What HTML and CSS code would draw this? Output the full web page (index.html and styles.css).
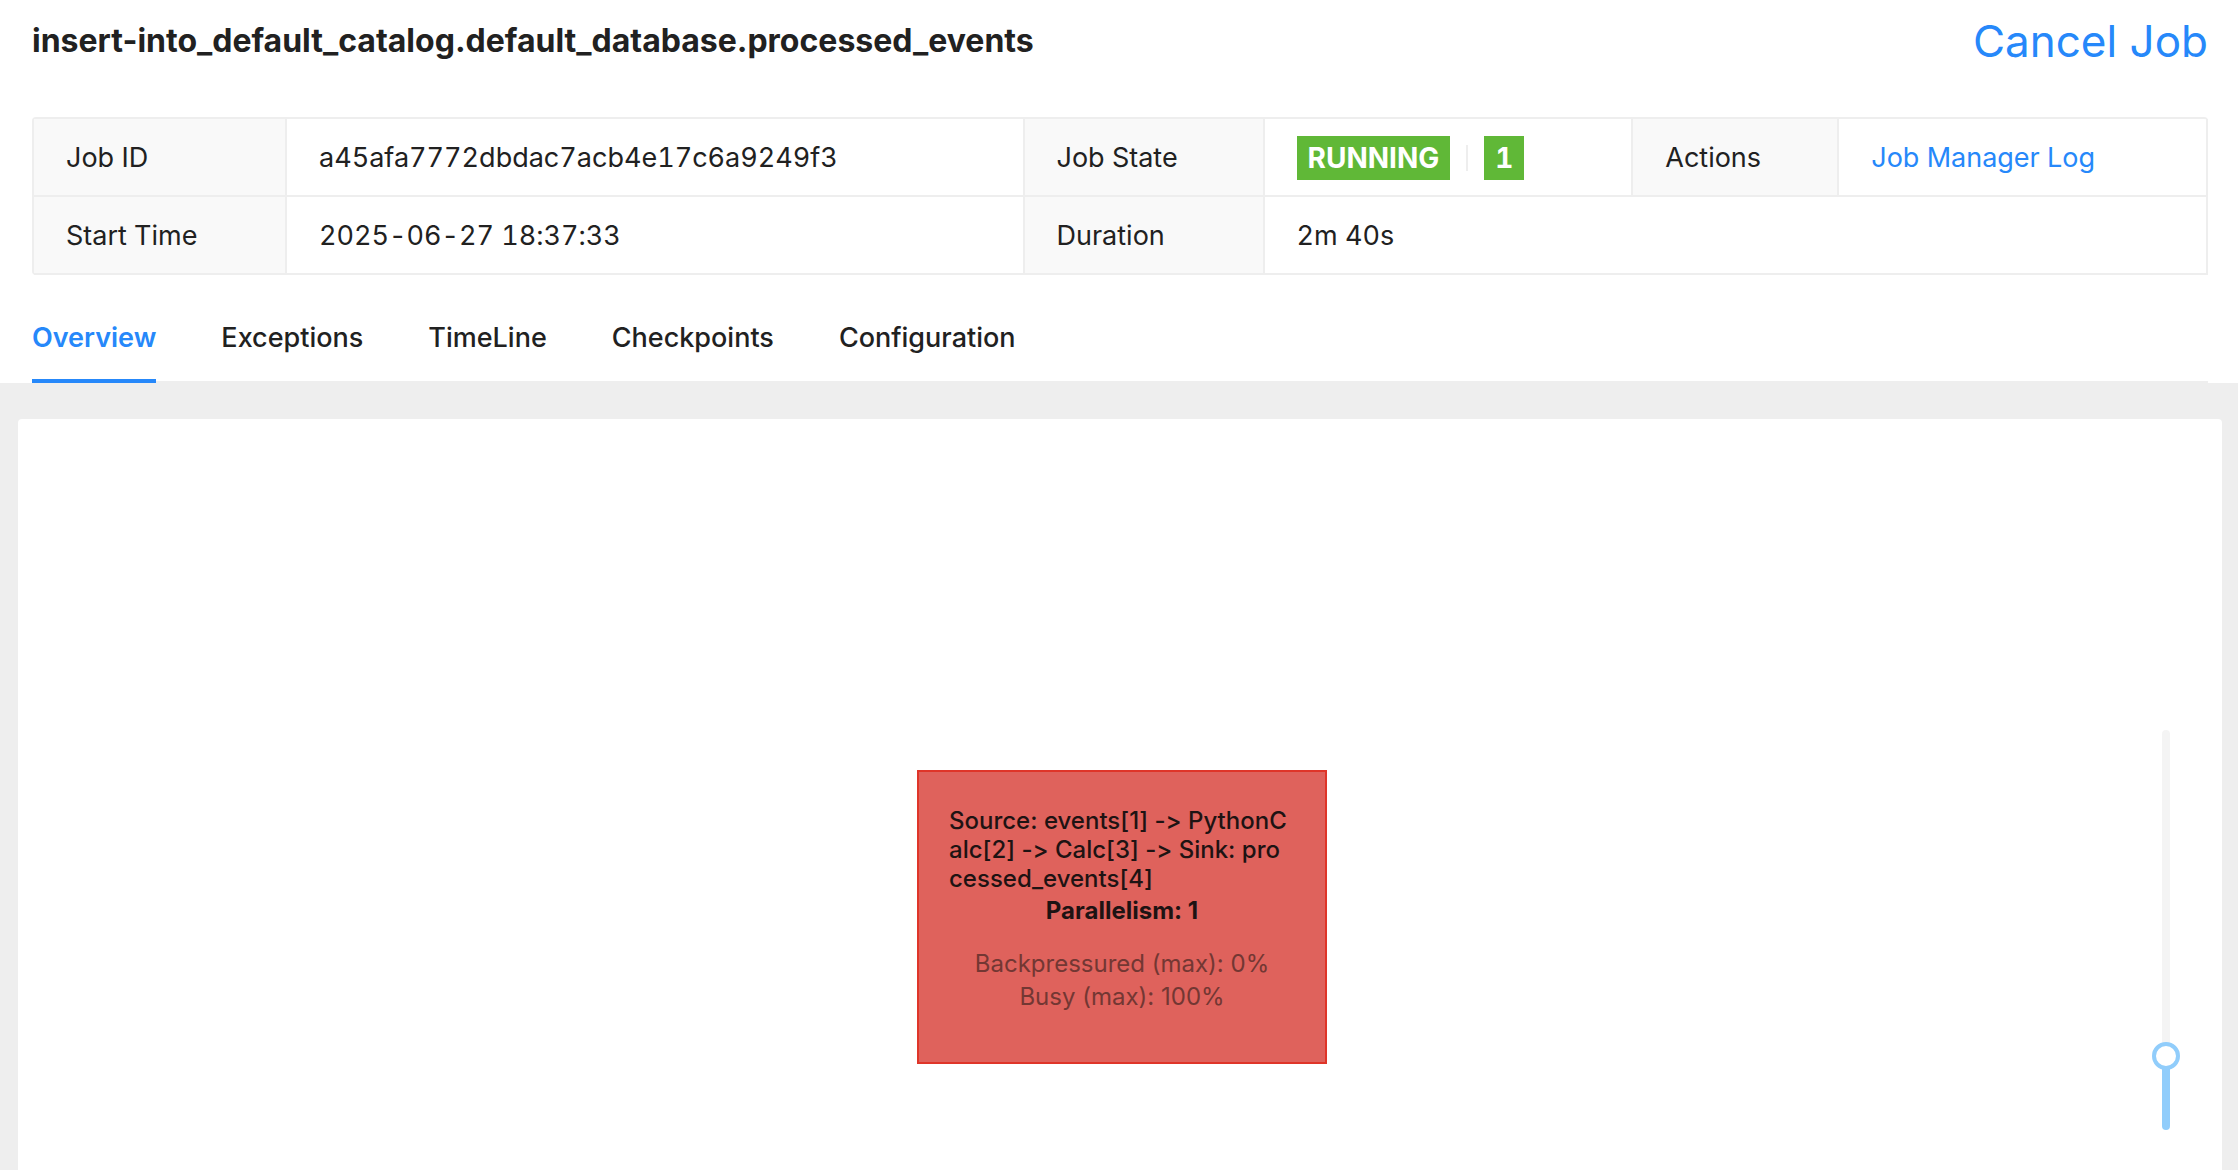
FILE: index.html
```html
<!DOCTYPE html>
<html lang="en">
<head>
<meta charset="utf-8">
<meta name="viewport" content="width=device-width, initial-scale=1">
<title>Job Overview</title>
<link rel="stylesheet" href="styles.css">
</head>
<body>
<header class="job-header">
  <div class="title-row">
    <h1 class="job-name">insert-into_default_catalog.default_database.processed_events</h1>
    <button class="cancel-button" type="button">Cancel Job</button>
  </div>
  <table class="descriptions">
    <colgroup>
      <col class="col-wide"><col><col><col class="col-medium"><col><col class="col-narrow"><col>
    </colgroup>
    <tbody>
      <tr>
        <th scope="row">Job ID</th>
        <td colspan="2">a45afa7772dbdac7acb4e17c6a9249f3</td>
        <th scope="row">Job State</th>
        <td>
          <div class="state">
            <span class="badge">RUNNING</span>
            <span class="divider"></span>
            <span class="badge">1</span>
          </div>
        </td>
        <th scope="row">Actions</th>
        <td><a class="link" href="#log">Job Manager Log</a></td>
      </tr>
      <tr>
        <th scope="row">Start Time</th>
        <td colspan="2">2025-06-27 18:37:33</td>
        <th scope="row">Duration</th>
        <td colspan="3">2m 40s</td>
      </tr>
    </tbody>
  </table>
  <nav class="tabs">
    <a class="tab tab-active" href="#overview" aria-current="page">Overview</a>
    <a class="tab" href="#exceptions">Exceptions</a>
    <a class="tab" href="#timeline">TimeLine</a>
    <a class="tab" href="#checkpoints">Checkpoints</a>
    <a class="tab" href="#configuration">Configuration</a>
  </nav>
</header>
<main class="content">
  <section class="graph">
    <article class="node">
      <p class="node-name">Source: events[1] -&gt; PythonC<br>alc[2] -&gt; Calc[3] -&gt; Sink: pro<br>cessed_events[4]</p>
      <p class="node-parallelism">Parallelism: 1</p>
      <p class="node-metrics">Backpressured (max): 0%<br>Busy (max): 100%</p>
    </article>
    <input class="zoom-slider" type="range" min="0" max="100" value="16" aria-label="Zoom">
  </section>
</main>
</body>
</html>
```
FILE: styles.css
```css
* {
  box-sizing: border-box;
}

body {
  display: flex;
  flex-direction: column;
  min-height: 100vh;
  margin: 0;
  background: #eee;
  color: #212121;
  font-family: Inter, "Noto Sans", sans-serif;
  font-size: 27px;
  font-variant-ligatures: no-contextual;
  line-height: 44px;
}

.job-header {
  padding: 0 30px 0 32px;
  background: #fff;
}

.title-row {
  display: flex;
  align-items: center;
  justify-content: space-between;
  height: 82px;
  margin-bottom: 35px;
}

.job-name {
  margin: 0;
  font-size: 32px;
  font-weight: 700;
}

.cancel-button {
  padding: 0;
  border: 0;
  background: none;
  color: #2688fa;
  font: inherit;
  font-size: 44px;
  line-height: 56px;
  cursor: pointer;
}

.descriptions {
  width: 100%;
  table-layout: fixed;
  border: solid #eee;
  border-width: 2px 0 0 2px;
  border-radius: 4px;
  border-spacing: 0;
  font-variant-numeric: tabular-nums;
}

.col-wide {
  width: 253px;
}

.col-medium {
  width: 240px;
}

.col-narrow {
  width: 206px;
}

.descriptions th,
.descriptions td {
  height: 78px;
  padding: 2px 32px 0;
  border: solid #eee;
  border-width: 0 2px 2px 0;
  font-weight: 400;
  text-align: left;
  white-space: nowrap;
}

.descriptions th {
  background: #f9f9f9;
}

.state {
  display: flex;
  align-items: center;
  gap: 16px;
}

.badge {
  padding: 0 11px;
  background: #60b837;
  color: #fff;
  font-size: 28px;
  font-weight: 700;
}

.divider {
  width: 2px;
  height: 26px;
  background: #eee;
}

.link {
  color: #2688fa;
  text-decoration: none;
}

.tabs {
  display: flex;
  gap: 65px;
  margin-top: 32px;
  border-bottom: 2px solid #eee;
}

.tab {
  margin-bottom: -2px;
  padding: 9px 0 19px;
  border-bottom: 4px solid transparent;
  color: inherit;
  font-weight: 500;
  text-decoration: none;
}

.tab-active {
  border-color: #2688fa;
  color: #2688fa;
  font-weight: 600;
}

.content {
  display: flex;
  flex: 1;
  padding: 36px 16px 0 18px;
}

.graph {
  position: relative;
  flex: 1;
  min-height: 700px;
  border-radius: 4px 4px 0 0;
  background: #fff;
}

.node {
  position: absolute;
  top: 351px;
  left: calc(50% - 203px);
  width: 410px;
  height: 294px;
  padding: 34px 30px;
  border: 2px solid #df3529;
  background: #df625c;
  color: #1e1313;
  font-size: 24px;
  line-height: 29px;
  white-space: nowrap;
}

.node p {
  margin: 0;
}

.node-name {
  font-weight: 500;
}

.node .node-parallelism {
  margin: 3px 0 22px;
  font-weight: 700;
  text-align: center;
}

.node-metrics {
  color: #733733;
  line-height: 33px;
  text-align: center;
}

.zoom-slider {
  position: absolute;
  right: 42px;
  bottom: 40px;
  width: 28px;
  height: 400px;
  margin: 0;
  background: none;
  appearance: none;
  direction: rtl;
  writing-mode: vertical-lr;
}

.zoom-slider::-webkit-slider-runnable-track {
  width: 8px;
  height: 400px;
  border-radius: 4px;
  background: linear-gradient(to top, #91cdfb 18%, #f4f4f4 18%);
}

.zoom-slider::-webkit-slider-thumb {
  width: 28px;
  height: 28px;
  margin-left: -10px;
  border: 4px solid #91cdfb;
  border-radius: 50%;
  background: #fff;
  appearance: none;
}
```
